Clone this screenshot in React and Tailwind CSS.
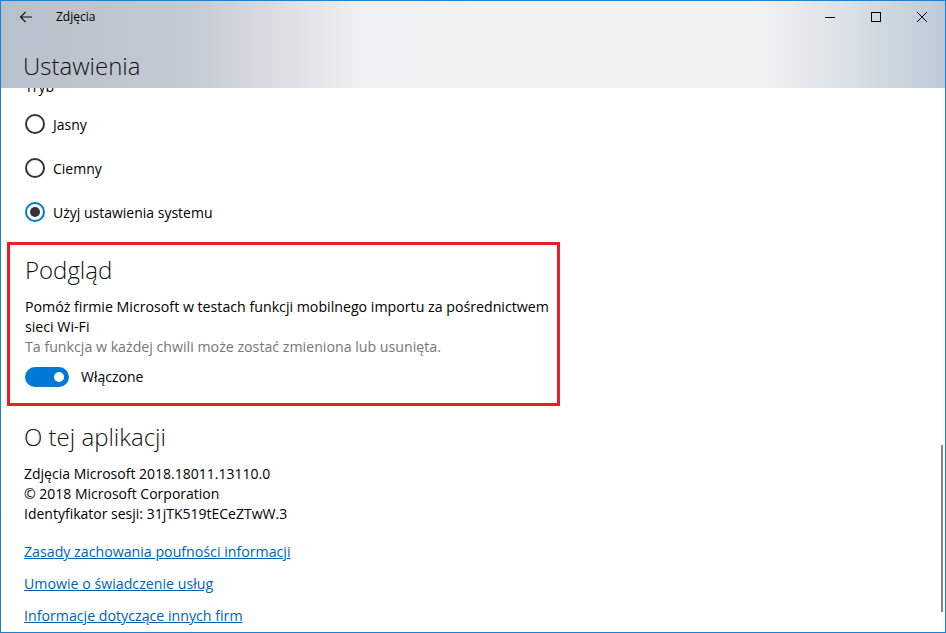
import React from "react";

const font = { fontFamily: '"Open Sans", "Noto Sans", sans-serif' };

function Radio({ checked, label }) {
  return (
    <div className="flex items-center h-[20px]">
      {checked ? (
        <div className="w-[20px] h-[20px] rounded-full border-2 border-[#0078d7] flex items-center justify-center">
          <div className="w-[10px] h-[10px] rounded-full bg-[#333]" />
        </div>
      ) : (
        <div className="w-[20px] h-[20px] rounded-full border-2 border-[#333]" />
      )}
      <span className="ml-[8px] text-[14px] text-black">{label}</span>
    </div>
  );
}

export default function App() {
  return (
    <div
      className="w-[946px] h-[633px] border border-[#1883d7] bg-white overflow-hidden flex flex-col relative"
      style={font}
    >
      <div className="h-[87px] shrink-0 bg-[linear-gradient(90deg,#b8c0cb_0%,#c4cad3_20%,#eef0f1_38%,#f2f2f2_50%,#f2f2f2_80%,#d9e0e6_90%,#bccad6_100%)] flex flex-col">
        <div className="h-[31px] flex items-center">
          <div className="w-[47px] flex justify-center pl-[2px]">
            <svg width="14" height="12" viewBox="0 0 14 12" fill="none" stroke="#111" strokeWidth="1.1">
              <path d="M13 6H1.5M6.5 1L1.5 6l5 5" />
            </svg>
          </div>
          <span className="ml-[8px] text-[12px] text-black">Zdjęcia</span>
          <div className="ml-auto flex h-full">
            <div className="w-[46px] flex items-center justify-center">
              <svg width="10" height="10" viewBox="0 0 10 10"><path d="M0 5.5h10" stroke="#000" strokeWidth="1" /></svg>
            </div>
            <div className="w-[46px] flex items-center justify-center">
              <svg width="10" height="10" viewBox="0 0 10 10"><rect x="0.5" y="0.5" width="9" height="9" fill="none" stroke="#000" strokeWidth="1" /></svg>
            </div>
            <div className="w-[46px] flex items-center justify-center">
              <svg width="10" height="10" viewBox="0 0 10 10"><path d="M0 0L10 10M10 0L0 10" stroke="#000" strokeWidth="1" /></svg>
            </div>
          </div>
        </div>
        <div className="pl-[22px] mt-[19px] text-[24px] leading-[30px] font-light text-[#111]">Ustawienia</div>
      </div>

      <div className="flex-1 overflow-hidden relative">
        <div className="mt-[-11px] pl-[24px]">
          <div className="text-[14px] leading-[20px] text-black">Tryb</div>
          <div className="mt-[17px] flex flex-col gap-[24px]">
            <Radio label="Jasny" />
            <Radio label="Ciemny" />
            <Radio checked label="Użyj ustawienia systemu" />
          </div>
        </div>

        <div className="mt-[20px] ml-[6px] w-[553px] h-[164px] border-[3px] border-[#ec1c24] pl-[15px] pt-[10px]">
          <div className="text-[24px] leading-[30px] font-light text-[#111]">Podgląd</div>
          <div className="mt-[12px] text-[14.2px] leading-[20px] text-black">
            Pomóż firmie Microsoft w testach funkcji mobilnego importu za pośrednictwem sieci Wi-Fi
          </div>
          <div className="text-[14.2px] leading-[20px] text-[#767676]">
            Ta funkcja w każdej chwili może zostać zmieniona lub usunięta.
          </div>
          <div className="mt-[9px] flex items-center">
            <div className="w-[44px] h-[20px] rounded-full bg-[#0078d7] relative">
              <div className="absolute right-[5px] top-[5px] w-[10px] h-[10px] rounded-full bg-white" />
            </div>
            <span className="ml-[12px] text-[14px] text-black">Włączone</span>
          </div>
        </div>

        <div className="pl-[23px] mt-[16px]">
          <div className="text-[24px] leading-[30px] font-light text-[#111]">O tej aplikacji</div>
          <div className="mt-[12px] text-[14px] leading-[20px] text-black">
            <div>Zdjęcia Microsoft 2018.18011.13110.0</div>
            <div>© 2018 Microsoft Corporation</div>
            <div>Identyfikator sesji: 31jTK519tECeZTwW.3</div>
          </div>
          <div className="mt-[18px] flex flex-col gap-[12px] text-[14.2px] leading-[20px] text-[#0063b1]">
            <span className="underline">Zasady zachowania poufności informacji</span>
            <span className="underline">Umowie o świadczenie usług</span>
            <span className="underline">Informacje dotyczące innych firm</span>
          </div>
        </div>

        <div className="absolute right-[2px] top-[357px] w-[2px] h-[167px] bg-[#858585]" />
      </div>
    </div>
  );
}
